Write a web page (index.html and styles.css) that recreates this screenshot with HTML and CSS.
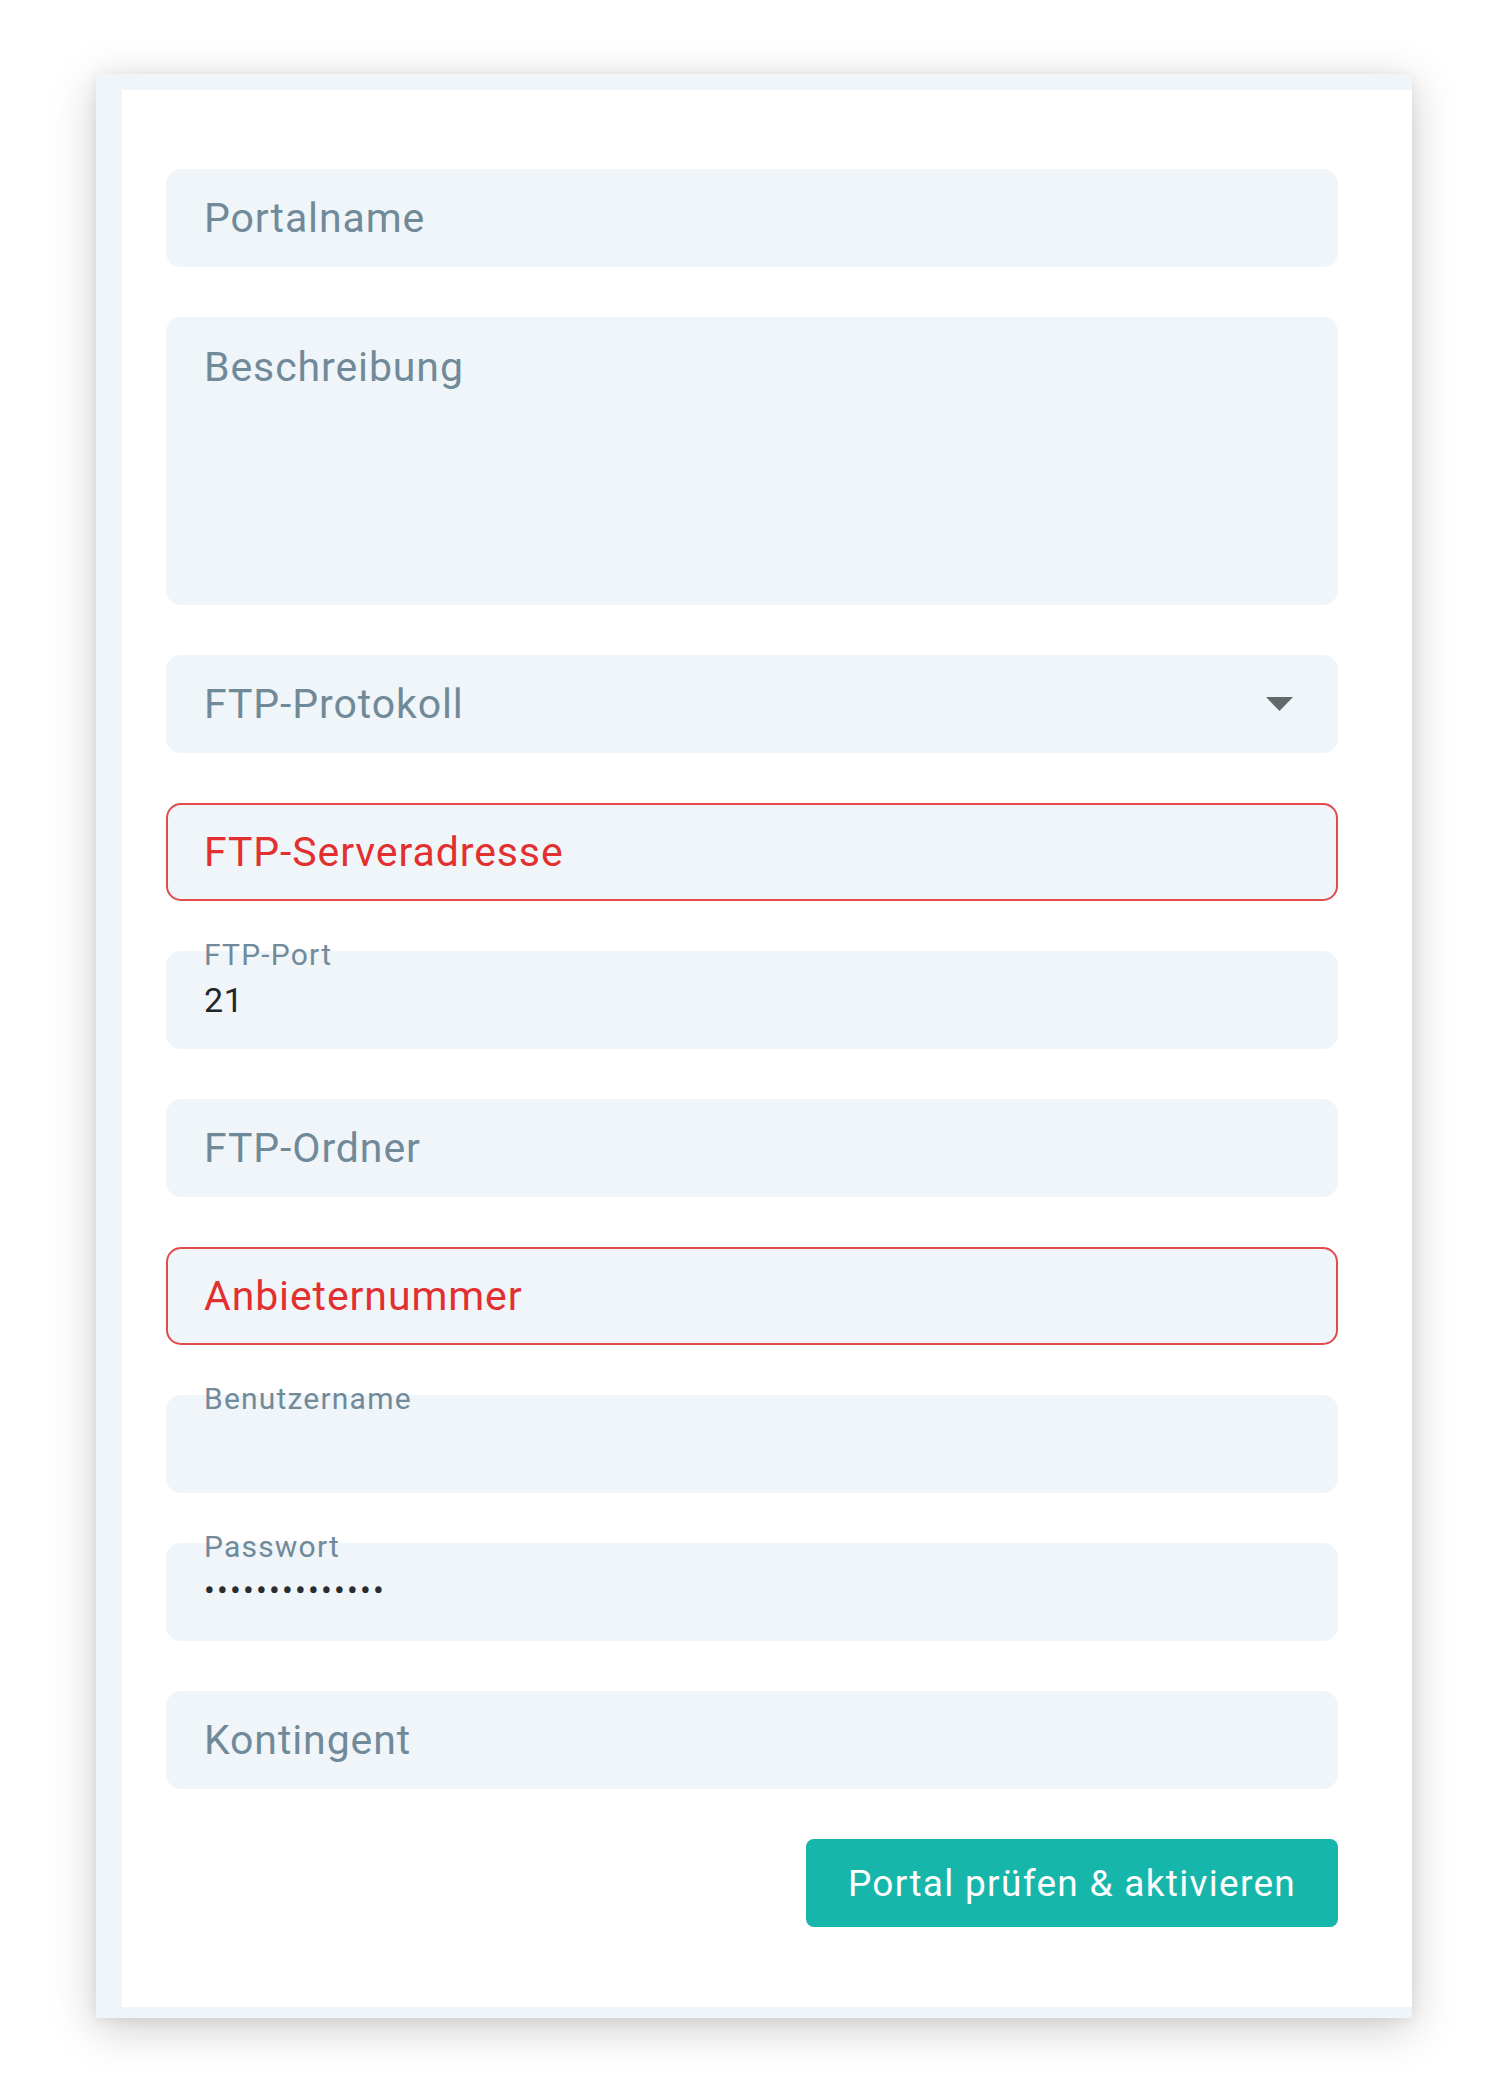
FILE: index.html
```html
<!DOCTYPE html>
<html lang="de">
<head>
<meta charset="utf-8">
<title>Portal</title>
<link rel="stylesheet" href="styles.css">
</head>
<body>
<div class="page">
  <div class="card">
    <form class="card-inner">
      <div class="field"><span class="placeholder">Portalname</span></div>
      <div class="field field-area"><span class="placeholder">Beschreibung</span></div>
      <div class="field field-select">
        <span class="placeholder">FTP-Protokoll</span>
        <svg class="caret" width="27" height="14" viewBox="0 0 27 14"><polygon points="0,0 27,0 13.5,14" fill="#63686b"/></svg>
      </div>
      <div class="field field-error"><span class="placeholder">FTP-Serveradresse</span></div>
      <div class="field field-filled">
        <span class="label">FTP-Port</span>
        <span class="value">21</span>
      </div>
      <div class="field"><span class="placeholder">FTP-Ordner</span></div>
      <div class="field field-error"><span class="placeholder">Anbieternummer</span></div>
      <div class="field field-filled">
        <span class="label">Benutzername</span>
        <span class="value"></span>
      </div>
      <div class="field field-filled">
        <span class="label">Passwort</span>
        <span class="value dots">••••••••••••••</span>
      </div>
      <div class="field"><span class="placeholder">Kontingent</span></div>
      <button type="button" class="submit">Portal prüfen &amp; aktivieren</button>
    </form>
  </div>
</div>
</body>
</html>
```

FILE: styles.css
```css
* { box-sizing: border-box; }

html, body {
  margin: 0;
  padding: 0;
  background: #ffffff;
}

body {
  width: 1508px;
  min-height: 2091px;
  font-family: Roboto, "Liberation Sans", Arial, sans-serif;
}

.page {
  padding: 74px 0 0 96px;
}

.card {
  width: 1316px;
  background: #f0f5f9;
  padding: 16px 0 11px 26px;
  box-shadow: 0 10px 44px rgba(0, 0, 0, 0.2), 0 2px 12px rgba(0, 0, 0, 0.07);
}

.card-inner {
  background: #ffffff;
  margin: 0;
  padding: 79px 74px 80px 44px;
  display: flex;
  flex-direction: column;
  gap: 50px;
}

.field {
  height: 98px;
  background: #f0f5f9;
  border-radius: 15px;
  padding: 0 38px;
  display: flex;
  align-items: center;
  justify-content: space-between;
}

.placeholder {
  font-size: 41px;
  line-height: 48px;
  letter-spacing: 0.9px;
  color: #718a9a;
}

.field-area {
  height: 288px;
  align-items: flex-start;
  padding-top: 26px;
}

.caret {
  display: block;
  margin-right: 7px;
}

.field-error {
  border: 2px solid #e34a4b;
  padding: 0 36px;
}

.field-error .placeholder {
  color: #e1302f;
}

.field-filled {
  flex-direction: column;
  align-items: flex-start;
  justify-content: flex-start;
}

.label {
  display: block;
  margin-top: -11px;
  font-size: 30px;
  line-height: 29px;
  letter-spacing: 1.2px;
  color: #718a9a;
}

.value {
  display: block;
  margin-top: 11px;
  min-height: 40px;
  font-size: 34px;
  line-height: 40px;
  letter-spacing: 0.6px;
  color: #222629;
}

.dots {
  margin-top: 9px;
  font-size: 32px;
  letter-spacing: 2.2px;
  color: #2a2d30;
}

.submit {
  align-self: flex-end;
  width: 532px;
  height: 88px;
  border: none;
  border-radius: 8px;
  background: #17b6ab;
  color: #ffffff;
  font-family: Roboto, "Liberation Sans", Arial, sans-serif;
  font-size: 37px;
  letter-spacing: 1.3px;
  font-weight: 400;
  padding: 0;
  cursor: pointer;
}
```
